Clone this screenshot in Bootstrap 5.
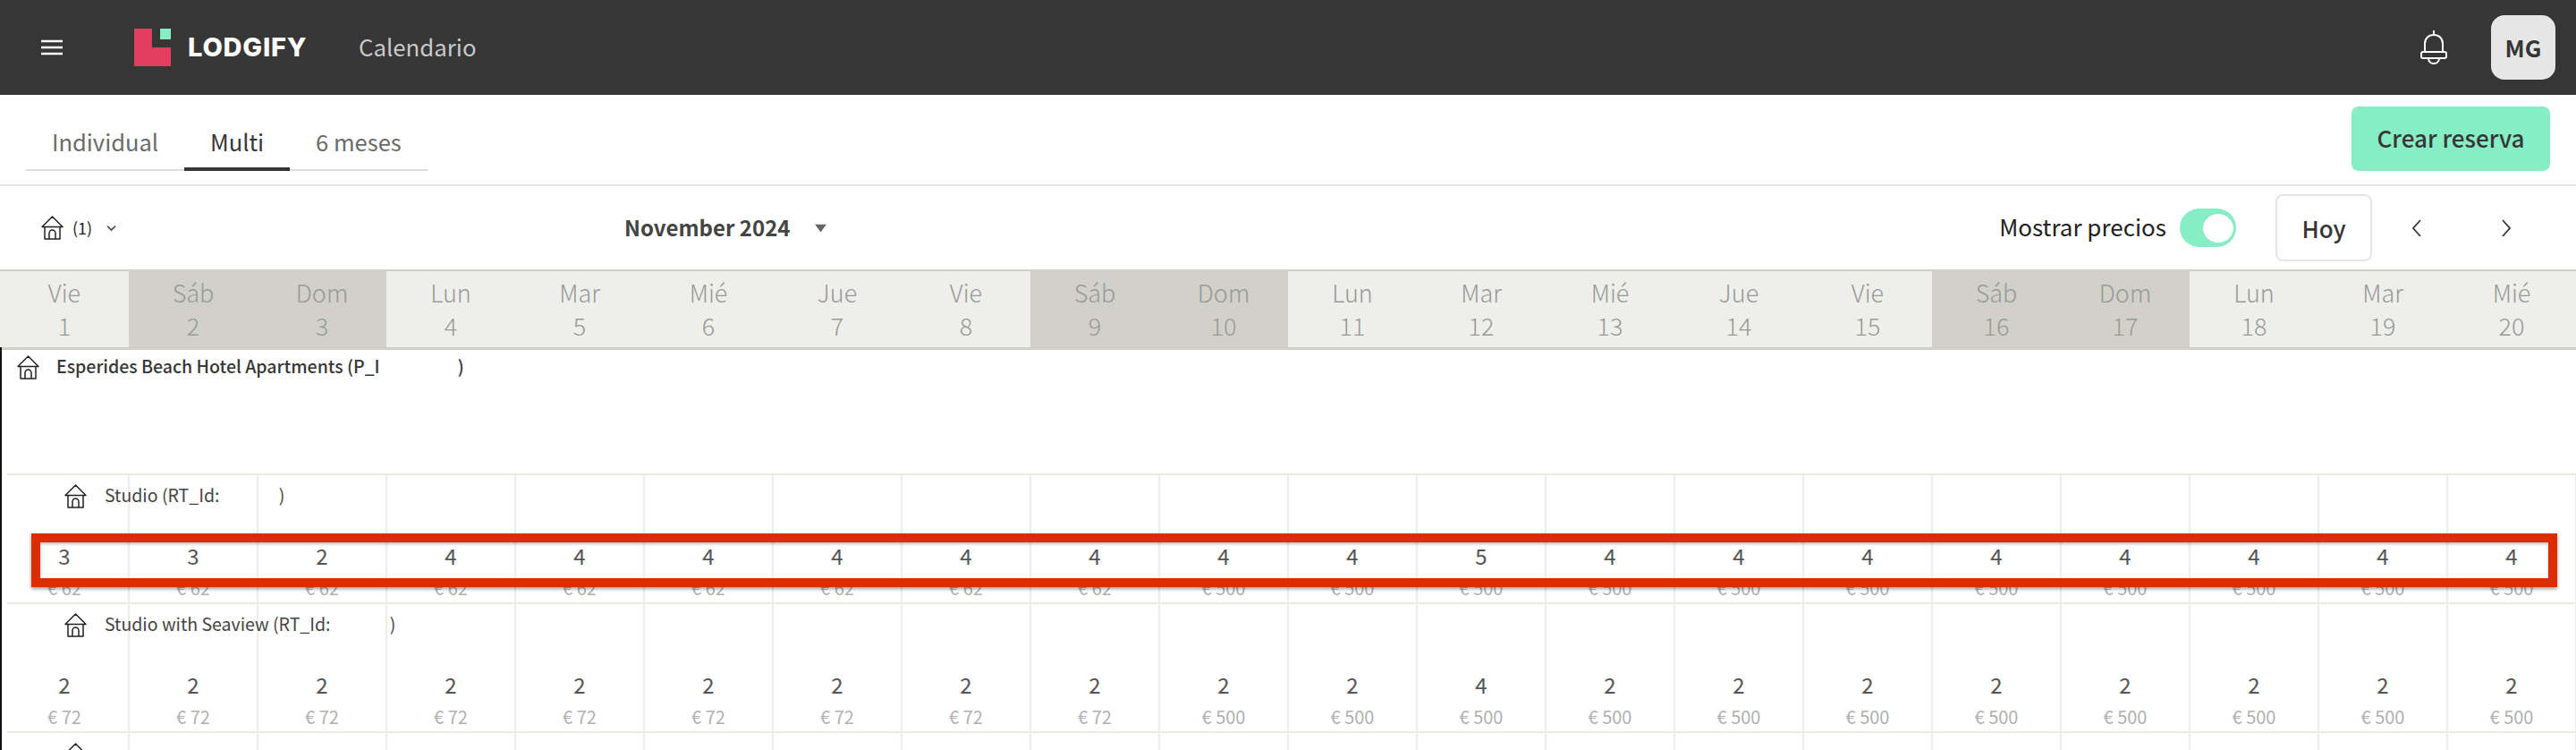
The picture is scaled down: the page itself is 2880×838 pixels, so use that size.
<!DOCTYPE html>
<html lang="es">
  <head>
    <meta charset="UTF-8" />
    <meta name="viewport" content="width=device-width, initial-scale=1" />
    <title>Lodgify - Calendario</title>
    <link
      href="https://cdn.jsdelivr.net/npm/bootstrap@5.3.0/dist/css/bootstrap.min.css"
      rel="stylesheet"
    />
    <style>
      html, body {
        height: 838px;
        overflow: hidden;
      }
      body {
        background-color: #fff;
        font-family: "Noto Sans CJK JP", "Open Sans", sans-serif;
        color: #363636;
        line-height: 1.2;
      }
      .page-shell {
        position: relative;
        width: 2880px;
        height: 838px;
        overflow: hidden;
      }

      /* barra superior */
      .top-bar {
        height: 106px;
        background-color: #363636;
        padding-left: 46px;
        padding-right: 23px;
      }
      .menu-lines {
        width: 24px;
        height: 20px;
        margin-right: 80px;
      }
      .brand-mark {
        width: 41px;
        height: 42px;
        margin-right: 19px;
      }
      .brand-name {
        font-family: "Inter", sans-serif;
        font-weight: 800;
        font-size: 29px;
        letter-spacing: 0.8px;
        color: #fff;
        width: 191px;
      }
      .page-title {
        font-size: 25.8px;
        color: #c9c9c9;
        padding-bottom: 2px;
      }
      .bell-icon {
        width: 30px;
        height: 38px;
        margin-right: 49px;
      }
      .user-chip {
        width: 72px;
        height: 72px;
        border-radius: 15px;
        background-color: #e6e6e6;
        font-size: 26px;
        font-weight: 700;
        color: #363636;
      }

      /* pestañas */
      .tabs-bar {
        height: 102px;
        border-bottom: 2px solid #e2e2e2;
        padding-left: 29px;
        padding-right: 29px;
        padding-top: 14px;
      }
      .view-tabs {
        height: 71px;
        border-bottom: 2px solid #dedede;
      }
      .view-tab {
        height: 71px;
        padding: 10px 29px 0;
        font-size: 25.5px;
        color: #6a6a6a;
        margin-bottom: -2px;
        border-bottom: 4px solid transparent;
      }
      .view-tab.is-active {
        color: #363636;
        border-bottom-color: #363636;
      }
      .btn-create {
        width: 222px;
        height: 72px;
        border-radius: 8px;
        background-color: #86edc4;
        border: 0;
        color: #363636;
        font-size: 26px;
        font-weight: 500;
        margin-top: -1px;
        padding: 0 0 3px;
      }

      /* filtros */
      .tool-bar {
        height: 93px;
        position: relative;
        padding-left: 46px;
      }
      .house-icon {
        width: 25px;
        height: 27px;
        flex: none;
      }
      .filter-count {
        font-size: 18px;
        color: #222;
        margin-left: 10px;
        margin-right: 16px;
      }
      .month-pick {
        position: absolute;
        left: 698px;
        top: 46px;
        transform: translateY(-50%);
        font-size: 24px;
        font-weight: 700;
        color: #444;
      }
      .month-caret {
        width: 13px;
        height: 9px;
        margin-left: 28px;
        margin-top: 2px;
      }
      .price-switch-label {
        font-size: 26px;
        color: #222;
        margin-right: 15px;
        padding-bottom: 4px;
      }
      .price-switch {
        width: 63px;
        height: 43px;
        border-radius: 22px;
        background-color: #86edc4;
        padding-right: 3px;
        margin-right: 44px;
      }
      .price-switch span {
        width: 34px;
        height: 32px;
        border-radius: 50%;
        background-color: #fff;
      }
      .btn-today {
        width: 108px;
        height: 75px;
        border: 2px solid #e6e6e6;
        border-radius: 8px;
        background-color: #fff;
        font-size: 26px;
        font-weight: 500;
        color: #363636;
        margin-right: 44px;
        margin-top: -1px;
      }
      .step-arrow {
        width: 12px;
        height: 20px;
      }
      .step-arrow + .step-arrow {
        margin-left: 88px;
        margin-right: 72px;
      }

      /* calendario */
      .cal-grid {
        display: grid;
        grid-template-columns: repeat(20, 144px);
      }
      .cal-body {
        border-left: 2px solid #111;
        margin-top: -3px;
        position: relative;
      }
      .cal-days {
        height: 90px;
        background-color: #eeefea;
        border-top: 2px solid #d1d1c9;
        border-bottom: 3px solid #d1d1c9;
      }
      .day-cell {
        text-align: center;
        font-size: 27px;
        font-weight: 300;
        line-height: 37px;
        color: #999;
        padding-top: 5px;
      }
      .day-cell.is-weekend {
        background-color: #d1d1c9;
      }
      .property-row {
        height: 141px;
        padding: 9px 0 0 17px;
        font-size: 19.5px;
        font-weight: 500;
        color: #363636;
        gap: 19px;
      }
      .room-row {
        height: 144px;
        position: relative;
        background-image: linear-gradient(#e9e9e0, #e9e9e0);
        background-size: 100% 2px;
        background-position: 6px 0;
        background-repeat: no-repeat;
      }
      .room-row::before {
        content: "";
        position: absolute;
        inset: 0;
        background-image: linear-gradient(
          to right,
          transparent 141.5px,
          #eeeee6 141.5px,
          #eeeee6 143px,
          transparent 143px
        );
        background-size: 144px 100%;
      }
      .room-label {
        position: relative;
        height: 70px;
        padding: 12px 0 0 70px;
        font-size: 19.5px;
        color: #444;
        gap: 20px;
      }
      .room-values {
        position: relative;
        margin-left: -2px;
      }
      .room-cell {
        text-align: center;
        height: 74px;
      }
      .room-count {
        font-size: 24px;
        line-height: 30px;
        color: #555;
        margin-top: 7px;
      }
      .room-price {
        font-size: 20px;
        line-height: 24px;
        color: #b0b0b0;
        margin-top: 9px;
      }
      .blank-gap {
        display: inline-block;
      }

      /* recuadro de anotacion */
      .note-frame {
        position: absolute;
        left: 35px;
        top: 596px;
        width: 2824px;
        height: 60px;
        border: 10px solid #dd2c00;
        box-shadow: 0 2px 4px rgba(0, 0, 0, 0.4),
          inset 0 2px 3px rgba(0, 0, 0, 0.25);
        pointer-events: none;
      }
    </style>
  </head>
  <body>
    <svg width="0" height="0" class="position-absolute">
      <symbol id="house" viewBox="0 0 25 27">
        <path
          d="M1 12.5 12.5 1 24 12.5ZM4 12.5V26H21V12.5M9 26V19.5a3.5 3.5 0 0 1 7 0V26"
          fill="none"
          stroke="#222"
          stroke-width="1.5"
          stroke-linejoin="round"
        />
      </symbol>
    </svg>

    <div class="page-shell">
      <header class="top-bar d-flex align-items-center">
        <svg class="menu-lines" viewBox="0 0 24 20">
          <path d="M0 3H24M0 10H24M0 17H24" stroke="#fff" stroke-width="2.4" />
        </svg>
        <svg class="brand-mark" viewBox="0 0 41 42">
          <path d="M0 0H20V21H41V42H0Z" fill="#e03e5c" />
          <rect x="29" y="0" width="12" height="12" fill="#86edc4" />
        </svg>
        <div class="brand-name">LODGIFY</div>
        <div class="page-title">Calendario</div>
        <div class="d-flex align-items-center ms-auto">
          <svg class="bell-icon" viewBox="0 0 30 38">
            <path
              d="M15 0V5M5 24V15C5 9 9 5 15 5S25 9 25 15V24M3 24H27C28 24 29 25 29 26V29C29 30 28 31 27 31H3C2 31 1 30 1 29V26C1 25 2 24 3 24ZM9 31C9 35 12 37 15 37S21 35 21 31"
              fill="none"
              stroke="#fff"
              stroke-width="2"
            />
          </svg>
          <div class="user-chip d-flex align-items-center justify-content-center">MG</div>
        </div>
      </header>

      <div class="tabs-bar d-flex justify-content-between align-items-start">
        <div class="view-tabs d-flex">
          <div class="view-tab d-flex align-items-center">Individual</div>
          <div class="view-tab is-active d-flex align-items-center">Multi</div>
          <div class="view-tab d-flex align-items-center">6 meses</div>
        </div>
        <button class="btn btn-create" type="button">Crear reserva</button>
      </div>

      <div class="tool-bar d-flex align-items-center">
        <svg class="house-icon"><use href="#house" /></svg>
        <span class="filter-count">(1)</span>
        <svg width="11" height="8" viewBox="0 0 11 8">
          <path d="M1 1.5 5.5 6 10 1.5" fill="none" stroke="#444" stroke-width="1.6" />
        </svg>
        <div class="month-pick d-flex align-items-center">
          November 2024
          <svg class="month-caret" viewBox="0 0 13 9"><path d="M0 0H13L6.5 9Z" fill="#666" /></svg>
        </div>
        <div class="d-flex align-items-center ms-auto">
          <span class="price-switch-label">Mostrar precios</span>
          <div class="price-switch d-flex align-items-center justify-content-end"><span></span></div>
          <button class="btn btn-today p-0" type="button">Hoy</button>
          <svg class="step-arrow" viewBox="0 0 12 20">
            <path d="M10 1 2 10l8 9" fill="none" stroke="#363636" stroke-width="1.8" />
          </svg>
          <svg class="step-arrow" viewBox="0 0 12 20">
            <path d="M2 1l8 9-8 9" fill="none" stroke="#363636" stroke-width="1.8" />
          </svg>
        </div>
      </div>

      <div class="cal-grid cal-days" id="diasCalendario"></div>

      <div class="cal-body" id="filasCalendario">
        <div class="property-row d-flex align-items-start">
          <svg class="house-icon"><use href="#house" /></svg>
          <span>Esperides Beach Hotel Apartments (P_I<span class="blank-gap" style="width: 87px"></span>)</span>
        </div>
      </div>

      <div class="note-frame"></div>
    </div>

    <script src="https://cdn.jsdelivr.net/npm/bootstrap@5.3.0/dist/js/bootstrap.bundle.min.js"></script>
    <script>
      var nombres = ["Vie", "Sáb", "Dom", "Lun", "Mar", "Mié", "Jue"];
      var dias = "";
      for (var i = 0; i < 20; i++) {
        var finde = i % 7 == 1 || i % 7 == 2 ? " is-weekend" : "";
        dias +=
          '<div class="day-cell' + finde + '">' + nombres[i % 7] + "<br />" + (i + 1) + "</div>";
      }
      document.getElementById("diasCalendario").innerHTML = dias;

      function fila(nombre, hueco, cuentas, bajo) {
        var celdas = "";
        for (var i = 0; i < 20; i++) {
          celdas +=
            '<div class="room-cell"><div class="room-count">' + cuentas[i] +
            '</div><div class="room-price">€ ' + (i < 9 ? bajo : 500) + "</div></div>";
        }
        return (
          '<div class="room-row"><div class="room-label d-flex align-items-start">' +
          '<svg class="house-icon"><use href="#house" /></svg><span>' + nombre +
          '<span class="blank-gap" style="width: ' + hueco + 'px"></span>)</span></div>' +
          '<div class="cal-grid room-values">' + celdas + "</div></div>"
        );
      }

      document.getElementById("filasCalendario").innerHTML +=
        fila("Studio (RT_Id: ", 62, [3,3,2,4,4,4,4,4,4,4,4,5,4,4,4,4,4,4,4,4], 62) +
        fila("Studio with Seaview (RT_Id: ", 62, [2,2,2,2,2,2,2,2,2,2,2,4,2,2,2,2,2,2,2,2], 72) +
        '<div class="room-row"><div class="room-label"><svg class="house-icon"><use href="#house" /></svg></div></div>';
    </script>
  </body>
</html>
